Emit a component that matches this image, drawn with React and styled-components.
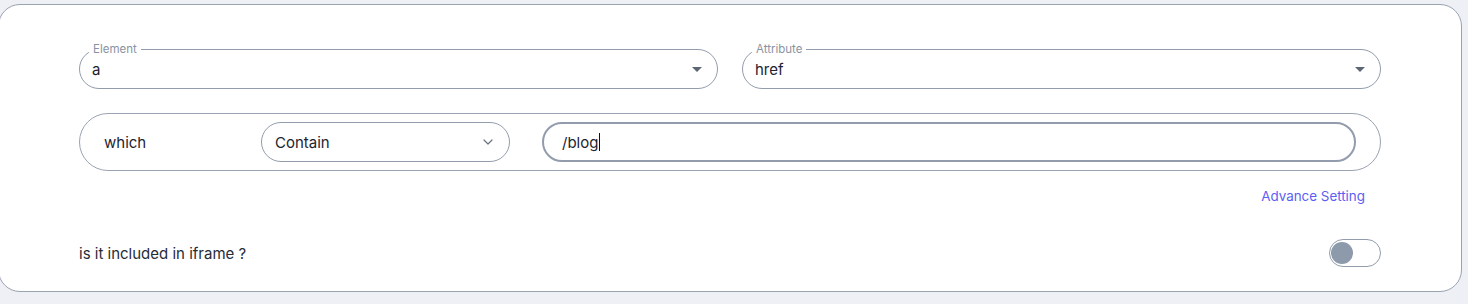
import React from "react";
import styled, { createGlobalStyle } from "styled-components";

const Global = createGlobalStyle`
  html, body { margin: 0; padding: 0; background: #eef0f5; }
  body { font-family: Inter, "Open Sans", "Liberation Sans", sans-serif; overflow: hidden; }
  * { box-sizing: border-box; }
`;

const Page = styled.div`
  padding: 4px 6px 12px 0;
`;

const Card = styled.section`
  margin-left: -2px;
  height: 288px;
  background: #ffffff;
  border: 1px solid #9aa3b2;
  border-radius: 22px;
  padding: 44px 80px 24px;
  display: flex;
  flex-direction: column;
`;

const SelectRow = styled.div`
  display: grid;
  grid-template-columns: 1fr 1fr;
  gap: 24px;
`;

const Outlined = styled.div`
  position: relative;
  height: 40px;
  border: 1px solid #929cac;
  border-radius: 20px;
  display: flex;
  align-items: center;
  padding: 0 14px 0 12px;
  color: #1d2330;
  font-size: 15px;
`;

const FloatLabel = styled.span`
  position: absolute;
  left: 9px;
  top: -8px;
  padding: 0 4px;
  background: #ffffff;
  font-size: 11.5px;
  line-height: 14px;
  color: #8a93a3;
`;

const Value = styled.span`
  flex: 1;
`;

const Caret = styled.span`
  width: 0;
  height: 0;
  border-left: 5px solid transparent;
  border-right: 5px solid transparent;
  border-top: 5px solid #5c6675;
  margin-right: 1px;
`;

const ConditionRow = styled.div`
  margin-top: 24px;
  height: 58px;
  border: 1px solid #9aa3b2;
  border-radius: 29px;
  padding: 8px 24px;
  display: flex;
  align-items: center;
`;

const Which = styled.span`
  width: 157px;
  font-size: 15px;
  color: #1d2330;
`;

const SmallSelect = styled.div`
  width: 249px;
  height: 40px;
  border: 1px solid #929cac;
  border-radius: 20px;
  display: flex;
  align-items: center;
  padding: 0 16px 0 13px;
  font-size: 15px;
  color: #1d2330;
`;

const ValueInput = styled.div`
  flex: 1;
  margin-left: 32px;
  height: 40px;
  border: 2px solid #929cac;
  border-radius: 20px;
  display: flex;
  align-items: center;
  padding: 0 18px;
  font-size: 15px;
  color: #1d2330;
`;

const TextCursor = styled.span`
  display: inline-block;
  width: 1px;
  height: 18px;
  background: #111;
  margin-left: 1px;
  vertical-align: middle;
`;

const LinkRow = styled.div`
  margin-top: 15px;
  display: flex;
  justify-content: flex-end;
  padding-right: 16px;
`;

const Link = styled.a`
  font-size: 13.4px;
  line-height: 20px;
  color: #5b5ef2;
  text-decoration: none;
  cursor: pointer;
`;

const ToggleRow = styled.div`
  margin-top: 33px;
  display: flex;
  align-items: center;
  justify-content: space-between;
  height: 28px;
`;

const Question = styled.span`
  font-size: 15px;
  color: #262c38;
`;

const Toggle = styled.div`
  width: 52px;
  height: 28px;
  border: 1px solid #929cac;
  border-radius: 14px;
  padding: 2px 1px;
  display: flex;
  justify-content: ${(p) => (p.$on ? "flex-end" : "flex-start")};
`;

const Knob = styled.span`
  width: 22px;
  height: 22px;
  border-radius: 50%;
  background: #8d9aab;
`;

const Chevron = () => (
  <svg width="10" height="6" viewBox="0 0 10 6" fill="none">
    <path d="M1 1l4 4 4-4" stroke="#6b7280" strokeWidth="1.2" strokeLinecap="round" strokeLinejoin="round" />
  </svg>
);

const SelectField = ({ label, value }) => (
  <Outlined>
    <FloatLabel>{label}</FloatLabel>
    <Value>{value}</Value>
    <Caret />
  </Outlined>
);

export default function App() {
  return (
    <>
      <Global />
      <Page>
        <Card>
          <SelectRow>
            <SelectField label="Element" value="a" />
            <SelectField label="Attribute" value="href" />
          </SelectRow>
          <ConditionRow>
            <Which>which</Which>
            <SmallSelect>
              <Value>Contain</Value>
              <Chevron />
            </SmallSelect>
            <ValueInput>
              /blog<TextCursor />
            </ValueInput>
          </ConditionRow>
          <LinkRow>
            <Link>Advance Setting</Link>
          </LinkRow>
          <ToggleRow>
            <Question>is it included in iframe ?</Question>
            <Toggle $on={false}>
              <Knob />
            </Toggle>
          </ToggleRow>
        </Card>
      </Page>
    </>
  );
}
